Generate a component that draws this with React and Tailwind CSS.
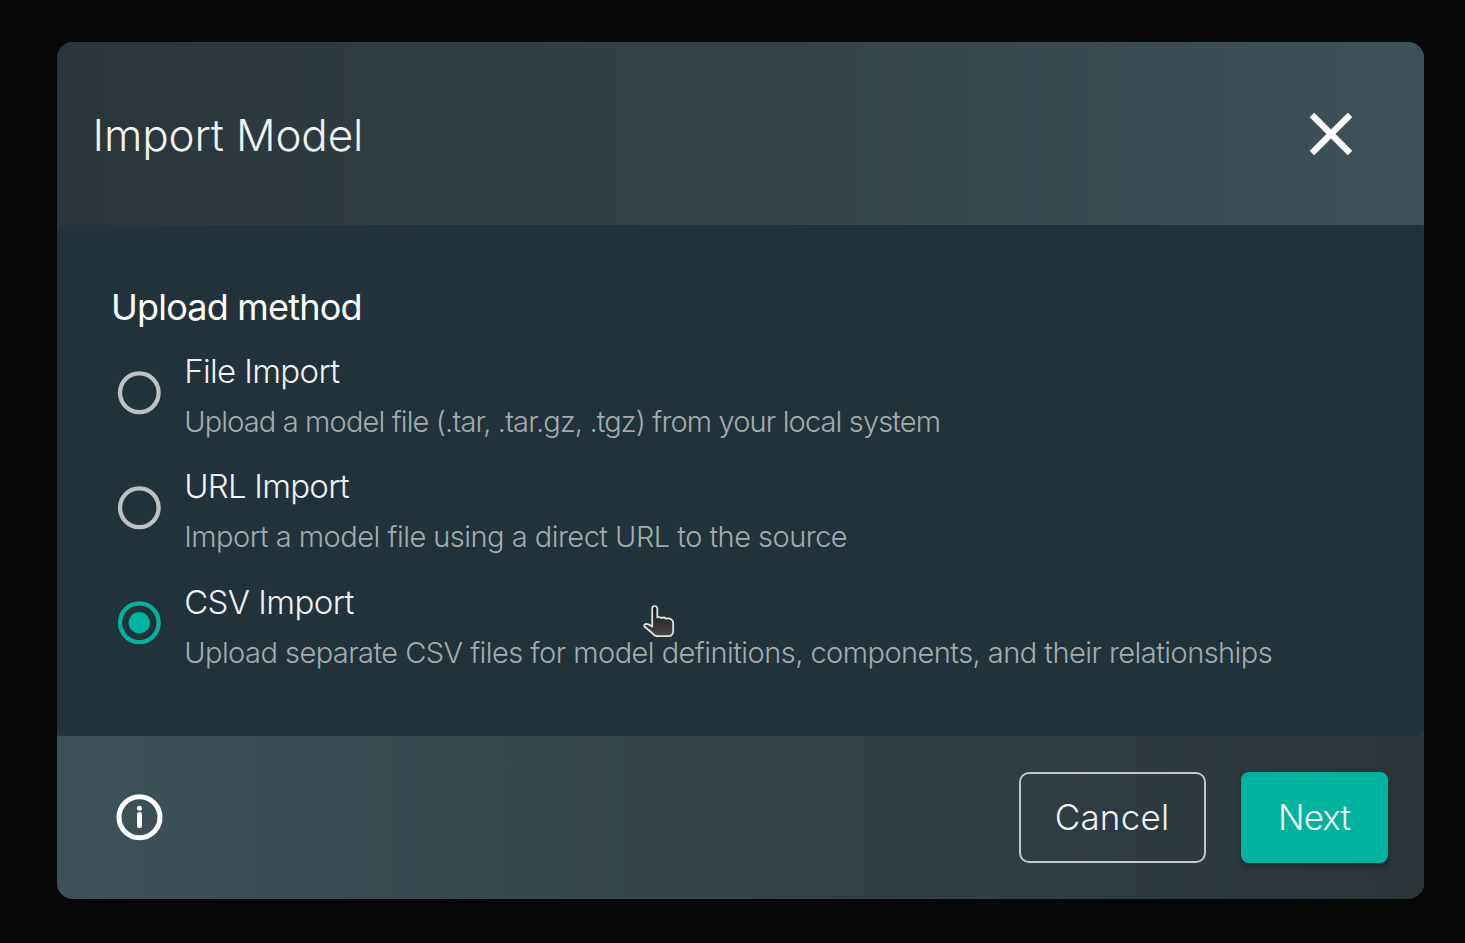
const methods = [
  {
    title: "File Import",
    titleClass: "tracking-[-0.65px]",
    text: "Upload a model file (.tar, .tar.gz, .tgz) from your local system",
    textClass: "tracking-[-0.86px]",
  },
  {
    title: "URL Import",
    titleClass: "tracking-[-0.75px]",
    text: "Import a model file using a direct URL to the source",
    textClass: "tracking-[-0.52px]",
  },
  {
    title: "CSV Import",
    titleClass: "tracking-[-0.6px]",
    text: "Upload separate CSV files for model definitions, components, and their relationships",
    textClass: "tracking-[-0.545px]",
    selected: true,
  },
];

function Radio({ selected }) {
  return (
    <svg
      viewBox="0 0 24 24"
      className={`mt-[27.6px] size-[51.5px] shrink-0 ${selected ? "text-[#00b39f]" : "text-[#bdc1c4]"}`}
      fill="none"
      stroke="currentColor"
      strokeWidth="2"
    >
      <circle cx="11.8" cy="12" r="9" />
      {selected && <circle cx="11.8" cy="12" r="5" fill="currentColor" stroke="none" />}
    </svg>
  );
}

function CloseIcon() {
  return (
    <svg viewBox="0 0 24 24" className="size-[72px]" fill="#fff" stroke="#fff" strokeWidth="0.2" strokeLinejoin="round">
      <path d="M19 6.41 17.59 5 12 10.59 6.41 5 5 6.41 10.59 12 5 17.59 6.41 19 12 13.41 17.59 19 19 17.59 13.41 12z" />
    </svg>
  );
}

function InfoIcon() {
  return (
    <svg viewBox="0 0 48 48" className="size-12" fill="none" stroke="#fff" strokeLinecap="round">
      <circle cx="23.5" cy="23.2" r="20.5" strokeWidth="5" />
      <path d="M23.5 20.5v11.4" strokeWidth="4.9" />
      <circle cx="23.5" cy="14.2" r="2.5" fill="#fff" stroke="none" />
    </svg>
  );
}

function HandCursor() {
  return (
    <svg
      viewBox="0 0 32 34"
      className="pointer-events-none absolute left-[586px] top-[562px] h-[34px] w-8"
      fill="url(#hand)"
      stroke="#e0e0e0"
      strokeWidth="1.8"
      strokeLinejoin="round"
    >
      <defs>
        <linearGradient id="hand" x1="0" y1="0" x2="0" y2="1">
          <stop offset="0" stopColor="#151515" />
          <stop offset="1" stopColor="#484848" />
        </linearGradient>
      </defs>
      <path d="M9.2 4.4Q9.3 2.2 11.7 2.2Q14.1 2.2 14.3 4.4V13.4Q16.8 12.5 18.5 14Q21 12.8 23.2 14.7Q26 13.8 28 15.3Q30.2 16.5 30.2 19V26.5Q30.2 32.2 25.5 32.2H14.6Q11.6 32.2 9.4 29.2L1.2 22.2Q.9 20 3.5 19.8Q6 19.8 9.2 22.6Z" />
    </svg>
  );
}

export default function App() {
  return (
    <div className="flex h-[943px] w-[1465px] items-start overflow-hidden bg-[#090909] pl-[56.5px] pt-[42px] font-['Inter',sans-serif] font-light text-white">
      <div className="relative flex h-[857px] w-[1367px] flex-col overflow-hidden rounded-2xl bg-[#363535] shadow-[0_24px_60px_rgba(0,0,0,0.35)]">
        <header className="flex h-[183px] shrink-0 items-center justify-between bg-linear-to-r from-[#2a353a] to-[#3e5159] pl-[36px] pr-[56.5px]">
          <h2 className="mt-[2px] text-[44px] leading-[60px] tracking-[-0.15px] text-[#f0f1f1]">Import Model</h2>
          <button type="button" aria-label="Close" className="mt-px">
            <CloseIcon />
          </button>
        </header>

        <main className="h-[511px] shrink-0 rounded-md bg-[#22323a] pl-[54.5px] pt-[57px]">
          <h3 className="mb-[7px] text-[36px] font-normal leading-[50px] tracking-[-0.8px]">Upload method</h3>
          {methods.map((m) => (
            <div key={m.title} className="flex h-[115.3px] gap-[19.2px] pl-[2.5px]">
              <Radio selected={m.selected} />
              <div className="pt-[7px]">
                <div className={`whitespace-nowrap text-[33px] leading-[50px] text-[#f0f1f1] ${m.titleClass}`}>{m.title}</div>
                <div className={`whitespace-nowrap text-[29px] leading-[52px] text-[#a3abaf] ${m.textClass}`}>{m.text}</div>
              </div>
            </div>
          ))}
        </main>

        <footer className="flex flex-1 items-center justify-between bg-linear-to-r from-[#3e5159] to-[#2a353a] pl-[59px] pr-[36px]">
          <InfoIcon />
          <div className="flex gap-[35px] text-[35px] text-[#f0f1f1]">
            <button type="button" className="h-[91px] w-[187px] rounded-[10px] border-2 border-[#c3c7c9] pb-px tracking-[0.2px]">
              Cancel
            </button>
            <button type="button" className="h-[91px] w-[147px] rounded-lg bg-[#00b39f] pb-px tracking-[-0.9px] shadow-[0_3px_6px_rgba(0,0,0,0.35)]">
              Next
            </button>
          </div>
        </footer>

        <HandCursor />
      </div>
    </div>
  );
}
